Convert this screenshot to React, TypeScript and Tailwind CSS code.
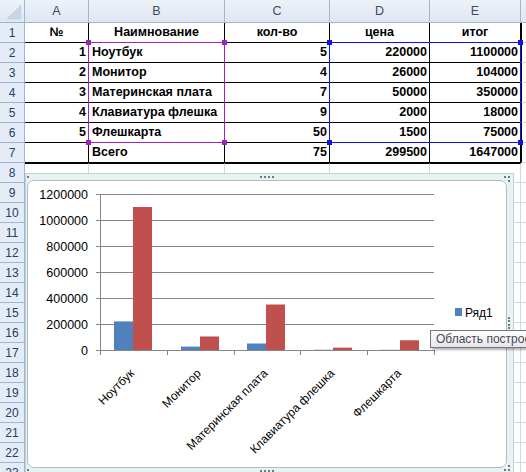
import React from "react";

const colW = ["w-[64px]", "w-[136px]", "w-[105px]", "w-[100px]", "w-[91px]"];
const letters = ["A", "B", "C", "D", "E"];

const table: (string | number)[][] = [
  ["№", "Наимнование", "кол-во", "цена", "итог"],
  [1, "Ноутбук", 5, 220000, 1100000],
  [2, "Монитор", 4, 26000, 104000],
  [3, "Материнская плата", 7, 50000, 350000],
  [4, "Клавиатура флешка", 9, 2000, 18000],
  [5, "Флешкарта", 50, 1500, 75000],
  ["", "Всего", 75, 299500, 1647000],
];

const names = ["Ноутбук", "Монитор", "Материнская плата", "Клавиатура флешка", "Флешкарта"];
const vals = [
  [220000, 1100000],
  [26000, 104000],
  [50000, 350000],
  [2000, 18000],
  [1500, 75000],
];
const yLabels = ["0", "200000", "400000", "600000", "800000", "1000000", "1200000"];

function SheetRow({ r }: { r: number }) {
  const inTable = r <= 7;
  const data = inTable ? table[r - 1] : null;
  return (
    <div className="flex h-[20px]">
      <div className="w-[25px] shrink-0 border-r border-b border-[#9eb6ce] bg-[#e4ecf7] flex items-center justify-center pt-[1px] text-[12px] text-[#27415f]">
        {r}
      </div>
      {colW.map((w, c) => {
        const v = data ? data[c] : "";
        const align =
          r === 1 ? "justify-center" : c === 1 ? "justify-start pl-[3px]" : "justify-end pr-[2px]";
        const border = inTable ? "border-black" : "border-[#d0d7e5]";
        const top = r === 8 ? "border-t border-t-black" : "";
        return (
          <div
            key={c}
            className={`${w} shrink-0 border-r border-b ${border} ${top} flex items-center ${align} font-bold text-[12.5px] text-black whitespace-nowrap overflow-hidden`}
          >
            {v}
          </div>
        );
      })}
      <div className={`flex-1 border-b border-[#d0d7e5] ${inTable ? "border-l border-l-black" : ""}`} />
    </div>
  );
}

function Chart() {
  const k = 26 / 200000;
  const cw = 66.75;
  return (
    <div className="absolute left-[25px] top-[173px] w-[489px] h-[310px] border border-[#c3cfd4] bg-[#e6f3f3] pt-[6px] pr-[6px] pl-[1px]">
      <div className="relative w-[480px] h-[288px] rounded-[7px] border border-[#b5bbc1] bg-white overflow-hidden">
        <svg
          className="absolute left-0 top-0"
          width="478"
          height="286"
          viewBox="28 181 478 286"
          fontFamily="'Liberation Sans', Arial, sans-serif"
        >
          {[1, 2, 3, 4, 5, 6].map((i) => (
            <line
              key={i}
              x1={96}
              x2={434}
              y1={350 - 26 * i + 0.5}
              y2={350 - 26 * i + 0.5}
              stroke="#868686"
              shapeRendering="crispEdges"
            />
          ))}
          {vals.map(([b, r], i) => {
            const s = 100 + i * cw;
            const hb = b * k;
            const hr = r * k;
            return (
              <g key={i}>
                <rect x={Math.floor(s + 14.3)} y={350 - hb} width={19} height={hb} fill="#4f81bd" />
                <rect x={Math.floor(s + 33.3)} y={350 - hr} width={19} height={hr} fill="#c0504d" />
              </g>
            );
          })}
          <line x1={100.5} x2={100.5} y1={194} y2={351} stroke="#868686" shapeRendering="crispEdges" />
          <line x1={96} x2={434} y1={350.5} y2={350.5} stroke="#868686" shapeRendering="crispEdges" />
          {[0, 1, 2, 3, 4, 5].map((i) => {
            const x = Math.round(100 + i * cw) + 0.5;
            return (
              <line key={i} x1={x} x2={x} y1={350} y2={355} stroke="#868686" shapeRendering="crispEdges" />
            );
          })}
          {yLabels.map((t, i) => (
            <text key={t} x={88} y={350 - 26 * i + 5} textAnchor="end" fontSize="12.5" fill="#000">
              {t}
            </text>
          ))}
          {names.map((n, i) => {
            const cx = 100 + cw * (i + 0.5) + 1.5;
            const cy = 374;
            return (
              <text
                key={n}
                x={cx}
                y={cy}
                textAnchor="end"
                fontSize="12"
                fill="#000"
                transform={`rotate(-45 ${cx} ${cy})`}
              >
                {n}
              </text>
            );
          })}
          <rect x={455} y={308} width={7} height={8} fill="#4f81bd" />
          <text x={465} y={316.5} fontSize="12" fill="#000">
            Ряд1
          </text>
        </svg>
      </div>
    </div>
  );
}

function Handles() {
  const dots: [number, number][] = [
    [27, 176],
    [260, 176],
    [264, 176],
    [268, 176],
    [272, 176],
    [504, 176],
    [508, 176],
    [508, 180],
    [508, 317],
    [508, 320],
    [508, 324],
    [508, 327],
    [27, 469],
    [260, 470],
    [264, 470],
    [268, 470],
    [272, 470],
    [508, 465],
    [508, 469],
    [504, 469],
  ];
  return (
    <svg className="absolute left-0 top-0 pointer-events-none" width="526" height="472">
      {dots.map(([x, y], i) => (
        <rect key={i} x={x} y={y} width={2} height={2} fill="#6f7a80" />
      ))}
    </svg>
  );
}

export default function App() {
  return (
    <div className="relative w-[526px] h-[472px] overflow-hidden bg-white font-['Liberation_Sans',Arial,sans-serif]">
      <div className="flex h-[23px]">
        <div className="w-[25px] shrink-0 border-r border-b border-[#9eb6ce] bg-gradient-to-b from-[#edf2f9] to-[#dfe7f2] relative">
          <svg className="absolute left-0 top-0" width="24" height="22">
            <polygon points="21,5 21,19 7,19" fill="#c9d5e5" stroke="#b9c8db" strokeWidth="0.5" />
          </svg>
        </div>
        {letters.map((l, i) => (
          <div
            key={l}
            className={`${colW[i]} shrink-0 border-r border-b border-[#9eb6ce] bg-gradient-to-b from-[#edf2f9] to-[#dfe7f2] flex items-center justify-center text-[12.5px] text-[#3a4c63]`}
          >
            {l}
          </div>
        ))}
        <div className="flex-1 border-b border-[#9eb6ce] bg-gradient-to-b from-[#edf2f9] to-[#dfe7f2]" />
      </div>
      {Array.from({ length: 23 }, (_, i) => (
        <SheetRow key={i} r={i + 1} />
      ))}

      {/* selection ranges */}
      <div className="absolute left-[88px] top-[42px] w-[137px] h-[101px] border border-[#a020c8]" />
      <div className="absolute left-[86px] top-[40px] w-[5px] h-[5px] bg-[#a020c8]" />
      <div className="absolute left-[222px] top-[40px] w-[5px] h-[5px] bg-[#a020c8]" />
      <div className="absolute left-[86px] top-[140px] w-[5px] h-[5px] bg-[#a020c8]" />
      <div className="absolute left-[222px] top-[140px] w-[5px] h-[5px] bg-[#a020c8]" />

      <div className="absolute left-[329px] top-[42px] w-[192px] h-[101px] border border-[#1010f0]" />
      <div className="absolute left-[327px] top-[40px] w-[5px] h-[5px] bg-[#1010f0]" />
      <div className="absolute left-[518px] top-[40px] w-[5px] h-[5px] bg-[#1010f0]" />
      <div className="absolute left-[327px] top-[140px] w-[5px] h-[5px] bg-[#1010f0]" />
      <div className="absolute left-[518px] top-[140px] w-[5px] h-[5px] bg-[#1010f0]" />

      <Chart />
      <Handles />

      {/* tooltip */}
      <div className="absolute left-[430px] top-[330px] h-[18px] flex items-center border border-[#767676] bg-gradient-to-b from-white to-[#e4e5ef] pl-[5px] pr-[6px] text-[12px] text-[#4c4c4c] whitespace-nowrap shadow-[2px_2px_2px_rgba(0,0,0,0.3)]">
        Область построения
      </div>
    </div>
  );
}
